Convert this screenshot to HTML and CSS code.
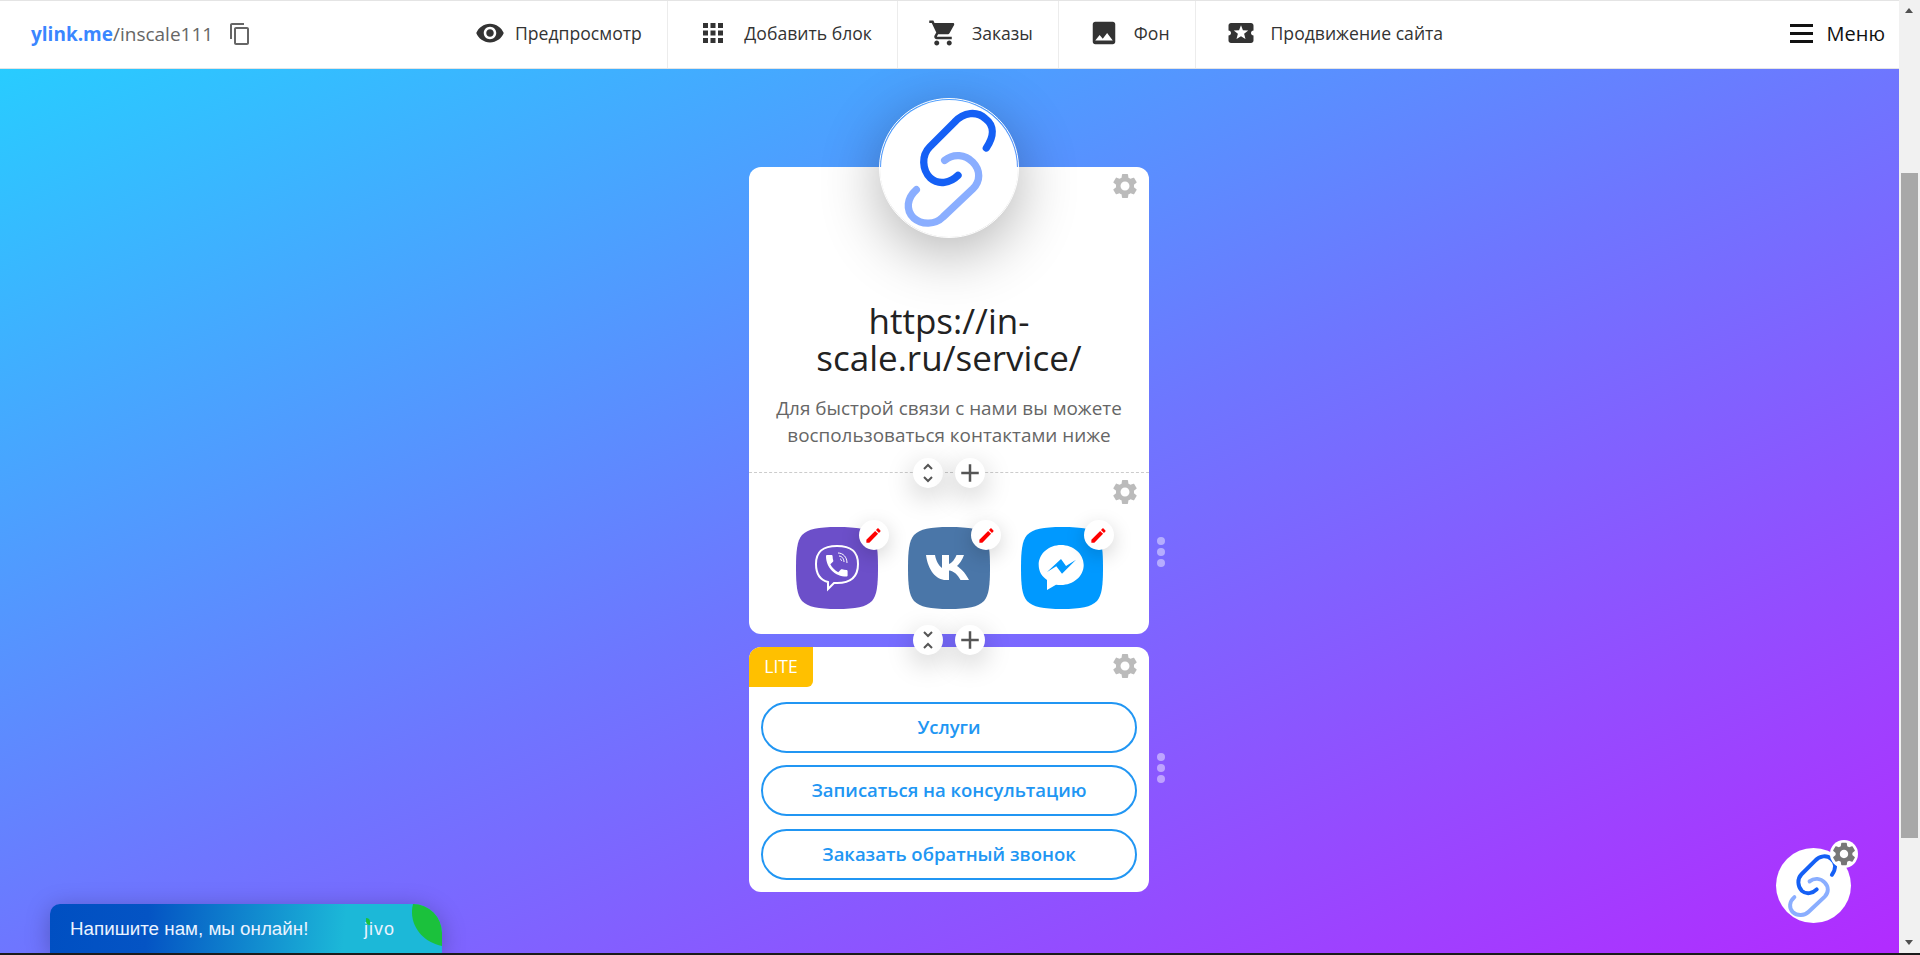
FILE: index.html
```html
<!DOCTYPE html>
<html lang="en">
<head>
  <meta charset="UTF-8" />
  <meta name="viewport" content="width=device-width, initial-scale=1.0">
  <title>ylink.me</title>
  <link rel="stylesheet" href="styles.css">
</head>
<body>

<svg class="defs" width="0" height="0">
  <defs>
    <path id="gear" d="M19.14 12.94c.04-.3.06-.61.06-.94 0-.32-.02-.64-.07-.94l2.03-1.58c.18-.14.23-.41.12-.61l-1.92-3.32c-.12-.22-.37-.29-.59-.22l-2.39.96c-.5-.38-1.03-.7-1.62-.94l-.36-2.54c-.04-.24-.24-.41-.48-.41h-3.84c-.24 0-.43.17-.47.41l-.36 2.54c-.59.24-1.13.57-1.62.94l-2.39-.96c-.22-.08-.47 0-.59.22L2.74 8.87c-.12.21-.08.47.12.61l2.03 1.58c-.05.3-.09.63-.09.94s.02.64.07.94l-2.03 1.58c-.18.14-.23.41-.12.61l1.92 3.32c.12.22.37.29.59.22l2.39-.96c.5.38 1.03.7 1.62.94l.36 2.54c.05.24.24.41.48.41h3.84c.24 0 .44-.17.47-.41l.36-2.54c.59-.24 1.13-.56 1.62-.94l2.39.96c.22.08.47 0 .59-.22l1.92-3.32c.12-.22.07-.47-.12-.61l-2.01-1.58zM12 15.6c-1.98 0-3.6-1.62-3.6-3.6s1.62-3.6 3.6-3.6 3.6 1.62 3.6 3.6-1.62 3.6-3.6 3.6z"/>
    <path id="plus" d="M19 13h-6v6h-2v-6H5v-2h6V5h2v6h6v2z"/>
    <path id="pencil" d="M3 17.25V21h3.75L17.81 9.94l-3.75-3.75L3 17.25zM20.71 7.04c.39-.39.39-1.02 0-1.41l-2.34-2.34c-.39-.39-1.02-.39-1.41 0l-1.83 1.83 3.75 3.75 1.83-1.83z"/>
    <path id="squircle" d="M41 0C62 0 72 2 77 8C81 14 82 24 82 41C82 58 81 68 76 74C70 80 60 82 41 82C22 82 12 80 6 74C1 68 0 58 0 41C0 24 1 14 6 8C12 2 22 0 41 0Z"/>
    <g id="chain" fill="none" stroke-width="22" stroke-linecap="round">
      <path stroke="#8aaeff" d="M188 187C215 165 250 170 272 192C297 217 295 250 273 272L183 357C160 380 120 382 95 360C70 335 75 300 103 275"/>
      <path stroke="#1560f5" d="M313 150C337 115 337 82 310 62C285 38 245 42 218 72L143 147C118 172 120 215 145 240C170 262 205 255 228 232"/>
    </g>
  </defs>
</svg>

<div class="page">
  <div class="main">
    <header class="topbar">
      <div class="site-link">
        <span class="site-link-host">ylink.me</span><span class="site-link-path">/inscale111</span>
        <svg class="copy-icon" viewBox="0 0 24 24"><path d="M16 1H4c-1.1 0-2 .9-2 2v14h2V3h12V1zm3 4H8c-1.1 0-2 .9-2 2v14c0 1.1.9 2 2 2h11c1.1 0 2-.9 2-2V7c0-1.1-.9-2-2-2zm0 16H8V7h11v14z"/></svg>
      </div>
      <nav class="nav">
        <a class="nav-item nav-item-first">
          <svg class="nav-icon" viewBox="0 0 24 24"><path d="M12 4.5C7 4.5 2.73 7.61 1 12c1.73 4.39 6 7.5 11 7.5s9.27-3.11 11-7.5c-1.73-4.39-6-7.5-11-7.5zM12 17c-2.76 0-5-2.24-5-5s2.24-5 5-5 5 2.24 5 5-2.24 5-5 5zm0-8c-1.66 0-3 1.34-3 3s1.34 3 3 3 3-1.34 3-3-1.34-3-3-3z"/></svg>
          Предпросмотр
        </a>
        <a class="nav-item nav-item-wide">
          <svg class="nav-icon" viewBox="0 0 24 24"><path d="M4 8h4V4H4v4zm6 12h4v-4h-4v4zm-6 0h4v-4H4v4zm0-6h4v-4H4v4zm6 0h4v-4h-4v4zm6-10v4h4V4h-4zm-6 4h4V4h-4v4zm6 6h4v-4h-4v4zm0 6h4v-4h-4v4z"/></svg>
          Добавить блок
        </a>
        <a class="nav-item nav-item-tight">
          <svg class="nav-icon" viewBox="0 0 24 24"><path d="M7 18c-1.1 0-1.99.9-1.99 2S5.9 22 7 22s2-.9 2-2-.9-2-2-2zM1 2v2h2l3.6 7.59-1.35 2.45c-.16.28-.25.61-.25.96 0 1.1.9 2 2 2h12v-2H7.42c-.14 0-.25-.11-.25-.25l.03-.12.9-1.63h7.45c.75 0 1.41-.41 1.75-1.03l3.58-6.47c.08-.14.12-.31.12-.48 0-.55-.45-1-1-1H5.21l-.94-2H1zm16 16c-1.1 0-1.99.9-1.99 2s.89 2 1.99 2 2-.9 2-2-.9-2-2-2z"/></svg>
          Заказы
        </a>
        <a class="nav-item">
          <svg class="nav-icon" viewBox="0 0 24 24"><path d="M21 19V5c0-1.1-.9-2-2-2H5c-1.1 0-2 .9-2 2v14c0 1.1.9 2 2 2h14c1.1 0 2-.9 2-2zM8.5 13.5l2.5 3.01L14.5 12l4.5 6H5l3.5-4.5z"/></svg>
          Фон
        </a>
        <a class="nav-item nav-item-last">
          <svg class="nav-icon" viewBox="0 0 24 24"><path d="M20 12c0-1.1.9-2 2-2V6c0-1.1-.9-2-2-2H4c-1.1 0-1.99.9-1.99 2v4c1.1 0 1.99.9 1.99 2s-.89 2-2 2v4c0 1.1.9 2 2 2h16c1.1 0 2-.9 2-2v-4c-1.1 0-2-.9-2-2zm-4.42 4.8L12 14.5l-3.58 2.3 1.08-4.12-3.29-2.69 4.24-.25L12 5.8l1.54 3.95 4.24.25-3.29 2.69 1.09 4.11z"/></svg>
          Продвижение сайта
        </a>
      </nav>
      <a class="menu-btn">
        <span class="burger"><i></i><i></i><i></i></span>
        Меню
      </a>
    </header>

    <div class="stage">
      <div class="column">
        <section class="card">
          <div class="avatar">
            <svg viewBox="0 0 420 420"><use href="#chain"/></svg>
          </div>
          <div class="card-head">
            <svg class="gear" viewBox="0 0 24 24"><use href="#gear"/></svg>
            <h1 class="title">https://in-scale.ru/service/</h1>
            <p class="subtitle">Для быстрой связи с нами вы можете воспользоваться контактами ниже</p>
            <div class="block-controls">
              <span class="round-btn">
                <svg viewBox="0 0 30 30"><path class="chevron" d="M11 11l4-4 4 4M11 19l4 4 4-4"/></svg>
              </span>
              <span class="round-btn">
                <svg viewBox="0 0 24 24"><use href="#plus"/></svg>
              </span>
            </div>
          </div>
          <div class="card-body">
            <svg class="gear" viewBox="0 0 24 24"><use href="#gear"/></svg>
            <div class="socials">
              <div class="social">
                <svg viewBox="0 0 82 82">
                  <use href="#squircle" fill="#6c4fc9"/>
                  <path d="M41 19C55 19 62 24 62 37C62 50 55 56 41 56L38 56L32 62L32 55C24 53 20 47 20 37C20 24 27 19 41 19Z" fill="none" stroke="#fff" stroke-width="2"/>
                  <path transform="translate(26.4 24.4) scale(1.2)" fill="#fff" d="M6.62 10.79c1.44 2.83 3.76 5.14 6.59 6.59l2.2-2.2c.27-.27.67-.36 1.02-.24 1.12.37 2.33.57 3.57.57.55 0 1 .45 1 1V20c0 .55-.45 1-1 1-9.39 0-17-7.61-17-17 0-.55.45-1 1-1h3.5c.55 0 1 .45 1 1 0 1.25.2 2.45.57 3.57.11.35.03.74-.25 1.02l-2.2 2.2z"/>
                  <path d="M42 26C47 26 51 30 51 36M43 29C46 29 48 32 48 35M44 32C45 32 45.500 33 45.500 34" fill="none" stroke="#fff" stroke-width="1"/>
                </svg>
                <span class="edit-btn"><svg viewBox="0 0 24 24"><use href="#pencil"/></svg></span>
              </div>
              <div class="social">
                <svg viewBox="0 0 82 82">
                  <use href="#squircle" fill="#4a76a8"/>
                  <path fill="#fff" d="M18 28H27C28 34 31 39 34 41V28H41V37C44 36 47 32 48.500 28H56C54.500 33 51 37 49 39C52 41 57 45 61 53H52.500C50 48 46 44 41 43.500V53H38C28 53 20 43 18 28Z"/>
                </svg>
                <span class="edit-btn"><svg viewBox="0 0 24 24"><use href="#pencil"/></svg></span>
              </div>
              <div class="social">
                <svg viewBox="0 0 82 82">
                  <use href="#squircle" fill="#0099ff"/>
                  <path fill="#fff" d="M40 18C28 18 17.700 26.500 17.700 38C17.700 44.500 21 49.500 26 53V63L35 57.700C36.500 58 38.300 58 40 58C52 58 62.700 49.500 62.700 38C62.700 26.500 52 18 40 18Z"/>
                  <path fill="#0099ff" d="M26 45L40 32L45 39L55 32.700L41 46.700L35.300 39.300Z"/>
                </svg>
                <span class="edit-btn"><svg viewBox="0 0 24 24"><use href="#pencil"/></svg></span>
              </div>
            </div>
            <div class="block-controls block-controls-bottom">
              <span class="round-btn">
                <svg viewBox="0 0 30 30"><path class="chevron" d="M11 7l4 4 4-4M11 23l4-4 4 4"/></svg>
              </span>
              <span class="round-btn">
                <svg viewBox="0 0 24 24"><use href="#plus"/></svg>
              </span>
            </div>
            <div class="drag-dots"><i></i><i></i><i></i></div>
          </div>
        </section>

        <section class="card card-links">
          <span class="lite-badge">LITE</span>
          <svg class="gear" viewBox="0 0 24 24"><use href="#gear"/></svg>
          <a class="link-btn">Услуги</a>
          <a class="link-btn">Записаться на консультацию</a>
          <a class="link-btn">Заказать обратный звонок</a>
          <div class="drag-dots"><i></i><i></i><i></i></div>
        </section>
      </div>

      <div class="jivo">
        <span class="jivo-text">Напишите нам, мы онлайн!</span>
        <span class="jivo-logo">jivo</span>
        <svg class="jivo-leaf" viewBox="0 0 30 42"><path d="M1 0H30V42C10 38 -4 20 1 0Z"/></svg>
      </div>

      <div class="float-logo">
        <svg viewBox="0 0 420 420"><use href="#chain"/></svg>
        <span class="float-gear"><svg viewBox="0 0 24 24"><use href="#gear"/></svg></span>
      </div>
    </div>
  </div>

  <div class="scrollbar">
    <span class="scroll-arrow up"></span>
    <div class="scroll-track"><div class="scroll-thumb"></div></div>
    <span class="scroll-arrow down"></span>
  </div>
</div>

</body>
</html>
```

FILE: styles.css
```css
* { margin: 0; padding: 0; box-sizing: border-box; }
html, body {
  height: 100%;
  overflow: hidden;
  background: #1b1b1b;
  font-family: "Open Sans", sans-serif;
}

.defs { position: absolute; }

.page {
  display: flex;
  height: 953px;
}

.main {
  flex: 1;
  display: flex;
  flex-direction: column;
  min-width: 0;
}

/* top bar */
.topbar {
  display: flex;
  align-items: stretch;
  height: 69px;
  background: #fff;
  border-top: 1px solid #e4e4e4;
  border-bottom: 1px solid #e4e4e4;
  color: #333;
}

.site-link {
  width: 475px;
  padding: 0 0 1px 31px;
  display: flex;
  align-items: center;
  font-size: 19px;
}
.site-link-host { color: #3a86ff; font-weight: 700; }
.site-link-path { color: #666; }
.copy-icon {
  width: 24px;
  height: 24px;
  margin-left: 15px;
  fill: #666;
}

.nav { display: flex; }

.nav-item {
  display: flex;
  align-items: center;
  gap: 15px;
  padding: 0 25px 3px 30px;
  font-size: 17.6px;
  border-right: 1px solid #ececec;
}
.nav-item-first { padding-left: 0; gap: 10px; }
.nav-item-wide { gap: 16.500px; }
.nav-item-tight { gap: 14px; }
.nav-item-last { border-right: 0; gap: 15px; }

.nav-icon {
  width: 30px;
  height: 30px;
  fill: #333;
}

.menu-btn {
  margin-left: auto;
  padding: 0 14px 2px 0;
  display: flex;
  align-items: center;
  gap: 14px;
  font-size: 20px;
  color: #111;
}

.burger {
  display: flex;
  flex-direction: column;
  gap: 5px;
  width: 23px;
}
.burger i {
  display: block;
  height: 3px;
  background: #111;
}

/* gradient area */
.stage {
  position: relative;
  flex: 1;
  overflow: hidden;
  background: linear-gradient(to bottom right, #28ccff 0%, #6e76ff 50%, #b22bff 100%);
  display: flex;
  justify-content: center;
  padding: 98px 1px 0 0;
}

.column { width: 400px; }

.card {
  position: relative;
  background: #fff;
  border-radius: 12px;
}

/* the gap between ring and disc only shows above the card */
.avatar {
  position: absolute;
  z-index: 2;
  top: -69px;
  left: 130px;
  width: 140px;
  height: 140px;
  padding: 1px;
  border: 1px solid #fff;
  border-radius: 50%;
  background: #fff content-box;
  box-shadow: 0 15px 60px rgba(0,0,0,0.3);
}
.avatar svg { display: block; width: 140px; height: 140px; margin: -2px 0 0 1px; }

.gear {
  position: absolute;
  z-index: 1;
  top: 4px;
  right: 9px;
  width: 30px;
  height: 30px;
  fill: #bbb;
}

.card-head {
  position: relative;
  padding: 135px 16px 23px;
  border-bottom: 1px dashed #ccc;
  text-align: center;
}

.title {
  font-size: 35px;
  font-weight: 400;
  line-height: 37px;
  color: #222;
  overflow-wrap: break-word;
  padding: 0 30px;
}

.subtitle {
  margin-top: 19px;
  font-size: 18.9px;
  line-height: 27px;
  color: #666;
}

.block-controls {
  position: absolute;
  z-index: 3;
  bottom: -16px;
  left: 164px;
  display: flex;
  gap: 12px;
}
.block-controls-bottom { bottom: -21px; }

.round-btn {
  width: 30px;
  height: 30px;
  border-radius: 50%;
  background: #fff;
  box-shadow: 0 8px 28px rgba(0,0,0,0.22);
}
.round-btn svg {
  display: block;
  width: 30px;
  height: 30px;
  fill: #555;
}
.chevron { fill: none; stroke: #555; stroke-width: 2; }

.card-body {
  position: relative;
  padding: 54px 0 25px;
}

.socials {
  display: flex;
  justify-content: center;
  gap: 30.500px;
}

.social {
  position: relative;
  width: 82px;
  height: 82px;
}
.social > svg { display: block; width: 82px; height: 82px; }

.edit-btn {
  position: absolute;
  top: -7px;
  left: 63px;
  width: 30px;
  height: 30px;
  padding: 5.500px;
  border-radius: 50%;
  background: #fff;
  box-shadow: 0 6px 20px rgba(0,0,0,0.18);
}
.edit-btn svg { display: block; width: 19px; height: 19px; fill: #f00; }

.drag-dots {
  position: absolute;
  top: 50%;
  right: -16px;
  margin-top: -16.500px;
  display: flex;
  flex-direction: column;
  gap: 3px;
}
.drag-dots i {
  display: block;
  width: 8px;
  height: 8px;
  border-radius: 50%;
  background: rgba(255,255,255,0.45);
}

.card-links {
  margin-top: 13px;
  padding: 55px 12px 12px;
  display: flex;
  flex-direction: column;
  gap: 12.400px;
}

.lite-badge {
  position: absolute;
  top: 0;
  left: 0;
  width: 64px;
  height: 40px;
  border-radius: 12px 0 6px 0;
  background: #ffc000;
  color: #fff;
  font-size: 17.500px;
  font-weight: 500;
  line-height: 38px;
  text-align: center;
}

.link-btn {
  height: 51px;
  border: 2px solid #2196f3;
  border-radius: 26px;
  color: #2196f3;
  font-size: 18.5px;
  font-weight: 600;
  line-height: 45px;
  text-align: center;
}

/* chat widget */
.jivo {
  position: absolute;
  left: 50px;
  bottom: 0;
  width: 392px;
  height: 49px;
  overflow: hidden;
  border-radius: 10px 29px 0 0;
  background: linear-gradient(95deg, #004fc2 0%, #0454c4 25%, #1cb8d8 75%);
  box-shadow: 0 4px 24px rgba(0,0,0,0.25);
  color: #eaf3ff;
  font-family: "Liberation Sans", sans-serif;
}
.jivo-text {
  position: absolute;
  left: 20px;
  top: 12px;
  font-size: 18.8px;
  line-height: 26px;
}
.jivo-logo {
  position: absolute;
  left: 314px;
  top: 14px;
  font-size: 18px;
  letter-spacing: 1px;
  line-height: 22px;
}
.jivo-logo::before {
  content: "";
  position: absolute;
  left: 2px;
  top: 0;
  width: 4px;
  height: 7px;
  border-radius: 0 4px 0 4px;
  background: #1bc13c;
}
.jivo-leaf {
  position: absolute;
  top: 0;
  right: 0;
  width: 30px;
  height: 42px;
  fill: #1bc13c;
}

.float-logo {
  position: absolute;
  right: 48px;
  bottom: 30px;
  width: 75px;
  height: 75px;
  border-radius: 50%;
  background: #fff;
}
.float-logo > svg { display: block; width: 75px; height: 75px; }

.float-gear {
  position: absolute;
  top: -8px;
  right: -7px;
  width: 28px;
  height: 28px;
  border-radius: 50%;
  background: #fff;
}
.float-gear svg { display: block; width: 28px; height: 28px; fill: #777; }

/* scrollbar */
.scrollbar {
  width: 21px;
  display: flex;
  flex-direction: column;
  background: #f1f1f1;
}
.scroll-track { flex: 1; }
.scroll-thumb {
  width: 17px;
  height: 665px;
  margin: 152px 0 0 2px;
  background: #a8a8a8;
}
.scroll-arrow {
  height: 21px;
  width: 21px;
  position: relative;
}
.scroll-arrow::after {
  content: "";
  position: absolute;
  left: 6px;
  border-left: 4.500px solid transparent;
  border-right: 4.500px solid transparent;
}
.scroll-arrow.up::after { top: 8px; border-bottom: 5px solid #505050; }
.scroll-arrow.down::after { bottom: 8px; border-top: 5px solid #505050; }
```
